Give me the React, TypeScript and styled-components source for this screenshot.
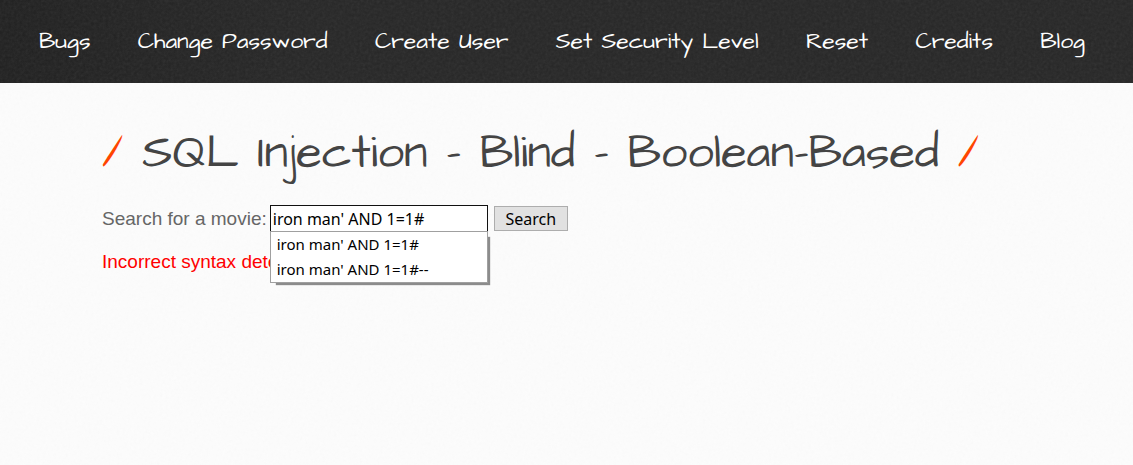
import React, { useState } from "react";
import styled, { createGlobalStyle } from "styled-components";

const handwriting = `"Architects Daughter", Lato, "Open Sans", sans-serif`;
const interfaceFont = `"Segoe UI", "Noto Sans", "Open Sans", sans-serif`;

const GlobalStyle = createGlobalStyle`
  *, *::before, *::after { box-sizing: border-box; }
  html { min-height: 100%; background: #fbfbfb; }
  body { margin: 0; font-family: Arial, "Liberation Sans", sans-serif; }
`;

const Page = styled.div`
  position: relative;
  isolation: isolate;
  min-height: 100vh;
  background: #fcfcfc;
`;

const Grain = styled.svg<{ $strength: number }>`
  position: absolute;
  inset: 0;
  z-index: -1;
  width: 100%;
  height: 100%;
  opacity: ${(p) => p.$strength};
  pointer-events: none;
`;

const Header = styled.header`
  position: relative;
  isolation: isolate;
  background: linear-gradient(90deg, #202020, #262626 25%);
`;

const Menu = styled.nav`
  display: flex;
  flex-wrap: wrap;
  justify-content: space-between;
  padding: 25px 48px 26px 39px;
`;

const MenuLink = styled.a`
  color: #fff;
  font: 23px/32px ${handwriting};
  text-decoration: none;
  white-space: nowrap;
`;

const Main = styled.main`
  padding: 43px 102px;
`;

const Title = styled.h1`
  margin: 0;
  color: #444;
  font: 400 47px/56px ${handwriting};
  white-space: nowrap;
`;

const Slash = styled.span`
  color: #ff4500;
`;

const SearchForm = styled.form`
  display: flex;
  align-items: center;
  margin-top: 23px;
`;

const Label = styled.label`
  margin-right: 3px;
  color: #666;
  font-size: 19px;
  line-height: 27px;
`;

const Combo = styled.div`
  position: relative;
  width: 218px;
  margin-right: 6px;
`;

const TextInput = styled.input`
  display: block;
  width: 100%;
  height: 27px;
  padding: 0 2px;
  border: 1px solid #111;
  border-radius: 0;
  outline: none;
  background: #fff;
  color: #000;
  font: 16px/24px ${interfaceFont};
`;

const Suggestions = styled.ul`
  position: absolute;
  top: 26px;
  left: 0;
  z-index: 1;
  width: 218px;
  margin: 0;
  padding: 0;
  border: 1px solid #a0a0a0;
  background: #fff;
  box-shadow: 4px 4px 1px -2px #8c8c8c;
  list-style: none;
`;

const Suggestion = styled.li`
  padding: 0 6px;
  color: #000;
  font: 15px/25px ${interfaceFont};
`;

const SearchButton = styled.button`
  width: 74px;
  height: 25px;
  padding: 0;
  border: 1px solid #adadad;
  border-radius: 0;
  background: #e1e1e1;
  color: #000;
  font: 16px/22px ${interfaceFont};
`;

const ErrorText = styled.p`
  margin: 16px 0 0;
  color: #f00;
  font-size: 19px;
  line-height: 27px;
`;

const links = ["Bugs", "Change Password", "Create User", "Set Security Level", "Reset", "Credits", "Blog"];
const history = ["iron man' AND 1=1#", "iron man' AND 1=1#--"];

function PaperGrain({ id, strength }: { id: string; strength: number }) {
  return (
    <Grain $strength={strength} aria-hidden="true">
      <filter id={id}>
        <feTurbulence type="fractalNoise" baseFrequency="0.35" numOctaves="3" />
        <feColorMatrix type="saturate" values="0" />
      </filter>
      <rect width="100%" height="100%" filter={`url(#${id})`} />
    </Grain>
  );
}

export default function App() {
  const [movie, setMovie] = useState(history[0]);
  return (
    <Page>
      <GlobalStyle />
      <PaperGrain id="paper" strength={0.03} />
      <Header>
        <PaperGrain id="slate" strength={0.09} />
        <Menu>
          {links.map((name) => (
            <MenuLink key={name} href="#">{name}</MenuLink>
          ))}
        </Menu>
      </Header>
      <Main>
        <Title>
          <Slash>/</Slash> SQL Injection - Blind - Boolean-Based <Slash>/</Slash>
        </Title>
        <SearchForm onSubmit={(e) => e.preventDefault()}>
          <Label htmlFor="movie">Search for a movie:</Label>
          <Combo>
            <TextInput id="movie" autoComplete="off" value={movie} onChange={(e) => setMovie(e.target.value)} />
            <Suggestions>
              {history.map((entry) => (
                <Suggestion key={entry} onClick={() => setMovie(entry)}>{entry}</Suggestion>
              ))}
            </Suggestions>
          </Combo>
          <SearchButton type="submit">Search</SearchButton>
        </SearchForm>
        <ErrorText>Incorrect syntax detected!</ErrorText>
      </Main>
    </Page>
  );
}
